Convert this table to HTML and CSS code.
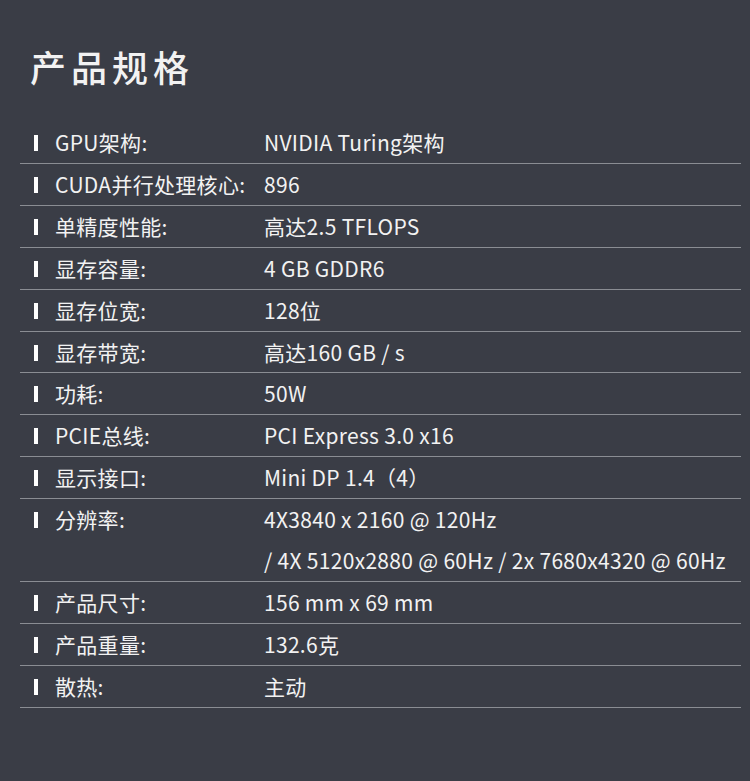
FILE: index.html
```html
<!DOCTYPE html>
<html lang="zh-CN">
<head>
<meta charset="utf-8">
<link rel="stylesheet" href="styles.css">
</head>
<body>
<div class="page">
  <h1 class="title">产品规格</h1>
  <div class="specs">
    <div class="row"><div class="label"><span class="bar"></span>GPU架构:</div><div class="value">NVIDIA Turing架构</div></div>
    <div class="row"><div class="label"><span class="bar"></span>CUDA并行处理核心:</div><div class="value">896</div></div>
    <div class="row"><div class="label"><span class="bar"></span>单精度性能:</div><div class="value">高达2.5 TFLOPS</div></div>
    <div class="row"><div class="label"><span class="bar"></span>显存容量:</div><div class="value">4 GB GDDR6</div></div>
    <div class="row"><div class="label"><span class="bar"></span>显存位宽:</div><div class="value">128位</div></div>
    <div class="row"><div class="label"><span class="bar"></span>显存带宽:</div><div class="value">高达160 GB / s</div></div>
    <div class="row"><div class="label"><span class="bar"></span>功耗:</div><div class="value">50W</div></div>
    <div class="row"><div class="label"><span class="bar"></span>PCIE总线:</div><div class="value">PCI Express 3.0 x16</div></div>
    <div class="row"><div class="label"><span class="bar"></span>显示接口:</div><div class="value">Mini DP 1.4（4）</div></div>
    <div class="row"><div class="label"><span class="bar"></span>分辨率:</div><div class="value">4X3840 x 2160 @ 120Hz<br>/ 4X 5120x2880 @ 60Hz / 2x 7680x4320 @ 60Hz</div></div>
    <div class="row"><div class="label"><span class="bar"></span>产品尺寸:</div><div class="value">156 mm x 69 mm</div></div>
    <div class="row"><div class="label"><span class="bar"></span>产品重量:</div><div class="value">132.6克</div></div>
    <div class="row"><div class="label"><span class="bar"></span>散热:</div><div class="value">主动</div></div>
  </div>
</div>
</body>
</html>
```
FILE: styles.css
```css
html, body {
  margin: 0;
  padding: 0;
  background: #3a3d46;
}
body {
  font-family: "Noto Sans CJK SC", "Noto Sans", sans-serif;
  color: #f2f2f2;
}
.page {
  width: 750px;
  height: 781px;
  padding: 0 9px 0 20px;
  box-sizing: border-box;
}
.title {
  margin: 0 0 30px 0;
  padding: 40px 0 0 10px;
  font-size: 36px;
  font-weight: 500;
  letter-spacing: 5px;
  line-height: 52px;
}
.specs {
  display: flex;
  flex-direction: column;
}
.row {
  display: flex;
  border-bottom: 1px solid #8a8d93;
  font-size: 21px;
  letter-spacing: 0.3px;
  line-height: 40.9px;
}
.label {
  width: 244px;
  flex: none;
  display: flex;
  align-items: flex-start;
}
.bar {
  width: 4px;
  height: 16px;
  background: #ffffff;
  margin: 13px 17px 0 14px;
  flex: none;
}
.value {
  flex: 1;
}
```
